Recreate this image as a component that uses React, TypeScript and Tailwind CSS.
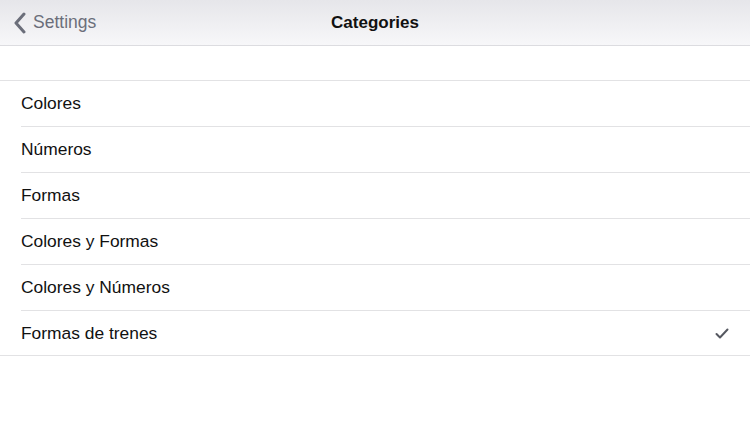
const ITEMS = [
  "Colores",
  "Números",
  "Formas",
  "Colores y Formas",
  "Colores y Números",
  "Formas de trenes",
];

const SELECTED = "Formas de trenes";

export default function App() {
  return (
    <main className="h-[422px] w-[750px] overflow-hidden bg-white font-['Liberation_Sans',Arial,sans-serif]">
      <header className="relative flex h-[46px] items-center border-b border-[#dcdce0] bg-gradient-to-b from-[#e6e6ea] to-[#f7f7f9]">
        <button className="flex items-center gap-[6px] pl-[13px] text-[17.5px] text-[#6b6e7a]">
          <svg width="14" height="22" viewBox="0 0 14 22" fill="none">
            <path d="M11 2 L3 11 L11 20" stroke="#6b6e7a" strokeWidth="3" strokeLinecap="round" strokeLinejoin="round" />
          </svg>
          Settings
        </button>
        <h1 className="absolute left-1/2 -translate-x-1/2 text-[17px] font-bold text-[#111]">Categories</h1>
      </header>

      <div className="h-[34px]" />

      <ul className="border-y border-[#e2e2e4]">
        {ITEMS.map((item, i) => (
          <li key={item} className="pl-[21px]">
            <div
              className={`flex items-center pr-[21px] text-[17.4px] text-[#111] ${
                i < ITEMS.length - 1 ? "h-[46px] border-b border-[#e2e2e4]" : "h-[44px]"
              }`}
            >
              <span className="flex-1">{item}</span>
              {item === SELECTED && (
                <svg width="14" height="11" viewBox="0 0 14 11" fill="none">
                  <path d="M1.5 6 L5 9.5 L12.5 1.5" stroke="#555860" strokeWidth="2" strokeLinecap="round" strokeLinejoin="round" />
                </svg>
              )}
            </div>
          </li>
        ))}
      </ul>
    </main>
  );
}
